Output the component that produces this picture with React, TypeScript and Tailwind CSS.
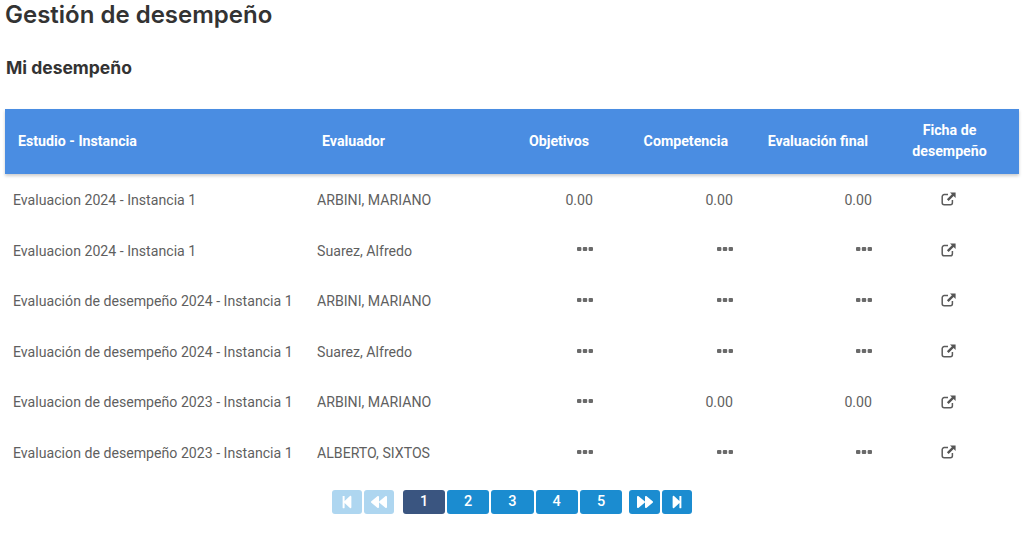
import { FaBackward, FaForward, FaStepBackward, FaStepForward } from 'react-icons/fa'

const ROWS = [
  { study: 'Evaluacion 2024 - Instancia 1', evaluator: 'ARBINI, MARIANO', goals: '0.00', skills: '0.00', final: '0.00' },
  { study: 'Evaluacion 2024 - Instancia 1', evaluator: 'Suarez, Alfredo' },
  { study: 'Evaluación de desempeño 2024 - Instancia 1', evaluator: 'ARBINI, MARIANO' },
  { study: 'Evaluación de desempeño 2024 - Instancia 1', evaluator: 'Suarez, Alfredo' },
  { study: 'Evaluacion de desempeño 2023 - Instancia 1', evaluator: 'ARBINI, MARIANO', skills: '0.00', final: '0.00' },
  { study: 'Evaluacion de desempeño 2023 - Instancia 1', evaluator: 'ALBERTO, SIXTOS' },
]

function Dots() {
  return (
    <svg width="16" height="4" viewBox="0 0 16 4" className="mb-[5px] ml-auto inline-block fill-[#6a6a6a]">
      <rect x="0" width="4.4" height="4" rx="1" />
      <rect x="5.8" width="4.4" height="4" rx="1" />
      <rect x="11.6" width="4.4" height="4" rx="1" />
    </svg>
  )
}

function LinkIcon() {
  return (
    <svg width="15" height="14" viewBox="0 0 15 14" className="mr-[2px] mb-[4px] inline-block">
      <path d="M7 2.6H3.2A2 2 0 0 0 1.2 4.6V10.8A2 2 0 0 0 3.2 12.8H9.4A2 2 0 0 0 11.4 10.8V8" fill="none" stroke="#5c5c5c" strokeWidth="1.5" />
      <path d="M9 0.4H14.6V6L12.6 4L7.6 9L5.9 7.3L10.9 2.3Z" fill="#555" />
    </svg>
  )
}

function Score({ value }: { value?: string }) {
  return <td className="pt-[2.6px] pr-2 text-right">{value ?? <Dots />}</td>
}

export default function App() {
  return (
    <div className="h-[534px] w-[1024px] overflow-hidden bg-white font-['Roboto',sans-serif] text-[#333]">
      <h1 className="pl-[5px] font-['Inter',sans-serif] text-2xl leading-[29px] font-semibold">Gestión de desempeño</h1>
      <h2 className="mt-[29px] pl-[6px] font-['Inter',sans-serif] text-[17.5px] leading-[20px] font-bold">Mi desempeño</h2>

      <table className="mt-[31px] ml-[5px] w-[1014px] table-fixed border-collapse text-[14.15px] text-[#5f5f5f]">
        <colgroup>
          <col className="w-[304px]" />
          <col className="w-[152px]" />
          <col className="w-[140px]" />
          <col className="w-[140px]" />
          <col className="w-[139px]" />
          <col className="w-[139px]" />
        </colgroup>
        <thead>
          <tr className="h-[65px] bg-[#4a8de2] text-[14.2px] leading-[21px] font-bold text-white shadow-[0_2px_3px_rgba(0,0,0,0.2)]">
            <th className="pb-[1px] pl-[13px] text-left">Estudio - Instancia</th>
            <th className="pb-[1px] pl-[13px] text-left">Evaluador</th>
            <th className="pr-3 pb-[1px] text-right">Objetivos</th>
            <th className="pr-[13px] pb-[1px] text-right">Competencia</th>
            <th className="pr-3 pb-[1px] text-right">Evaluación final</th>
            <th className="pb-[2px] text-center">Ficha de<br />desempeño</th>
          </tr>
        </thead>
        <tbody>
          {ROWS.map((row, i) => (
            <tr key={i} className="h-[50.6px]">
              <td className="pt-[2.6px] pl-2 whitespace-nowrap">{row.study}</td>
              <td className="pt-[2.6px] pl-2">{row.evaluator}</td>
              <Score value={row.goals} />
              <Score value={row.skills} />
              <Score value={row.final} />
              <td className="pt-[2.6px] text-center">
                <LinkIcon />
              </td>
            </tr>
          ))}
        </tbody>
      </table>

      {/* Pagination */}
      <div className="mt-[12px] ml-[332px] flex h-6 items-stretch text-[14.5px] font-medium text-white">
        <div className="flex gap-[2px]">
          <button className="flex w-[30px] items-center justify-center rounded-[3px] bg-[#aed6f0]"><FaStepBackward size={14} /></button>
          <button className="flex w-[30px] items-center justify-center rounded-[3px] bg-[#aed6f0]"><FaBackward size={16} /></button>
        </div>
        <div className="ml-[9px] flex gap-[2px]">
          <button className="w-[42px] rounded-[3px] bg-[#3a5580]">1</button>
          {['2', '3', '4', '5'].map(n => (
            <button key={n} className="w-[42.3px] rounded-[3px] bg-[#1b8cd0]">{n}</button>
          ))}
        </div>
        <div className="ml-[7px] flex gap-[2px]">
          <button className="flex w-[31px] items-center justify-center rounded-[3px] bg-[#1b8cd0]"><FaForward size={16} /></button>
          <button className="flex w-[30px] items-center justify-center rounded-[3px] bg-[#1b8cd0]"><FaStepForward size={14} /></button>
        </div>
      </div>
    </div>
  )
}
